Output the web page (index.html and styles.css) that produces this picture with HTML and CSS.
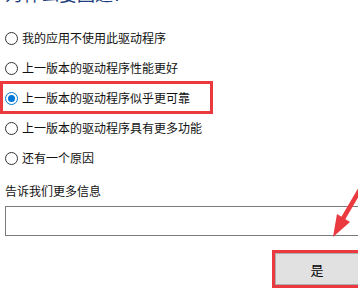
FILE: index.html
```html
<!DOCTYPE html>
<html lang="zh-CN">
<head>
<meta charset="utf-8">
<title>回退驱动程序</title>
<link rel="stylesheet" href="styles.css">
</head>
<body>
<div class="page">
  <div class="title">为什么要回退?</div>
  <div class="options">
    <label class="option"><span class="radio"></span><span class="text">我的应用不使用此驱动程序</span></label>
    <label class="option"><span class="radio"></span><span class="text">上一版本的驱动程序性能更好</span></label>
    <label class="option selected"><span class="radio"></span><span class="text">上一版本的驱动程序似乎更可靠</span></label>
    <label class="option"><span class="radio"></span><span class="text">上一版本的驱动程序具有更多功能</span></label>
    <label class="option"><span class="radio"></span><span class="text">还有一个原因</span></label>
  </div>
  <div class="more-label">告诉我们更多信息</div>
  <div class="textbox"></div>
  <div class="actions">
    <div class="btn-wrap"><div class="btn">是</div></div>
  </div>
  <div class="mark mark-option"></div>
  <svg class="arrow" width="358" height="301" viewBox="0 0 358 301">
    <line x1="368" y1="176" x2="341" y2="222" stroke="#ea3a3f" stroke-width="4.5"/>
    <polygon points="333,237 337,214 350,222" fill="#ea3a3f"/>
  </svg>
</div>
</body>
</html>
```
FILE: styles.css
```css
html, body {
  margin: 0;
  padding: 0;
  background: #ffffff;
}
body {
  width: 358px;
  height: 301px;
  overflow: hidden;
  font-family: "Noto Sans CJK SC", "Noto Sans", sans-serif;
  font-size: 12px;
  color: #111111;
}
.page {
  position: relative;
  width: 358px;
  height: 301px;
  overflow: hidden;
}
.title {
  margin-top: -16px;
  height: 18px;
  line-height: 18px;
  font-size: 18px;
  color: #1f3f7e;
  padding-left: 5px;
  white-space: nowrap;
}
.options {
  margin-top: 21px;
  display: flex;
  flex-direction: column;
  padding-left: 5px;
}
.option {
  height: 30px;
  display: flex;
  align-items: center;
  gap: 4px;
  white-space: nowrap;
}
.radio {
  box-sizing: border-box;
  width: 13px;
  height: 13px;
  border: 1px solid #333333;
  border-radius: 50%;
  flex: none;
  display: flex;
  align-items: center;
  justify-content: center;
}
.option.selected .radio {
  border-color: #0078d7;
}
.option.selected .radio::after {
  content: "";
  width: 7px;
  height: 7px;
  border-radius: 50%;
  background: #0078d7;
}
.text {
  line-height: 16px;
}
.more-label {
  margin-top: 10px;
  padding-left: 5px;
  line-height: 16px;
  height: 16px;
}
.textbox {
  box-sizing: border-box;
  margin-top: 7px;
  margin-left: 5px;
  width: 400px;
  height: 30px;
  border: 1px solid #7a7a7a;
  background: #ffffff;
}
.actions {
  margin-top: 14px;
  display: flex;
  padding-left: 272px;
}
.btn-wrap {
  box-sizing: border-box;
  border: 3px solid #ea3a3f;
  flex: none;
}
.btn {
  box-sizing: border-box;
  width: 84px;
  height: 32px;
  background: #e1e1e1;
  border: 1px solid #adadad;
  display: flex;
  align-items: center;
  justify-content: center;
  font-size: 13px;
  color: #000000;
}
.mark {
  position: absolute;
  box-sizing: border-box;
  border: 3px solid #ea3a3f;
}
.mark-option {
  left: 0;
  top: 81px;
  width: 213px;
  height: 33px;
}
.arrow {
  position: absolute;
  left: 0;
  top: 0;
  pointer-events: none;
}
```
